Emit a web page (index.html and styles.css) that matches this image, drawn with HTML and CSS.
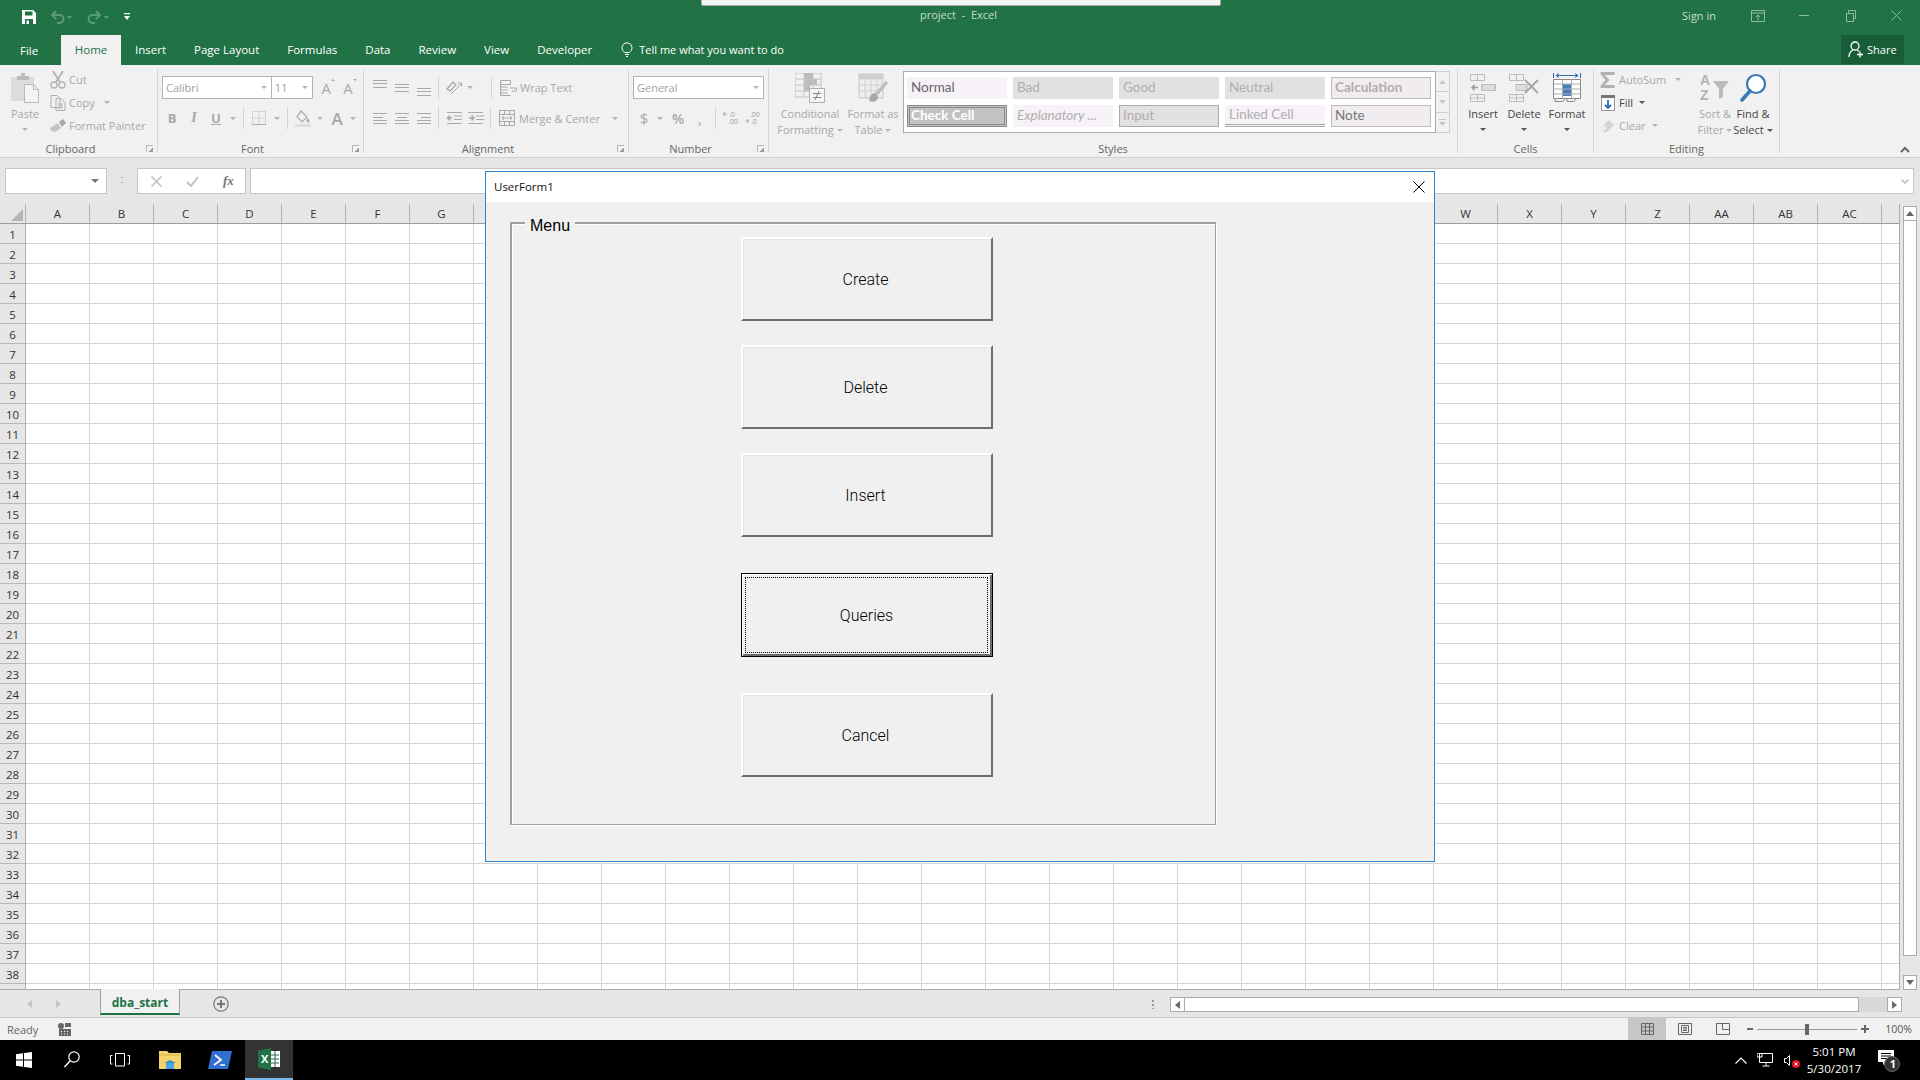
FILE: index.html
```html
<!DOCTYPE html>
<html lang="en">
<head>
  <meta charset="UTF-8">
  <title>project - Excel</title>
  <link rel="stylesheet" href="styles.css">
</head>
<body>
  <div class="rdp-bar"></div>

  <!-- title bar -->
  <header class="titlebar">
    <div class="qat">
      <svg class="qat-save" width="14" height="14" viewBox="0 0 14 14"><path d="M0 0h11l3 3v11H0z" fill="#fff"/><path d="M3 1.500h7.500v4H3z" fill="#217346"/><path d="M3 9h8v5H3z" fill="#217346"/><path d="M4.500 10.500h2.500V14H4.500z" fill="#fff"/></svg>
      <svg class="qat-undo" width="24" height="14" viewBox="0 0 24 14"><path d="M5 1L1 5l4 4M1.500 5h7a4 4 0 0 1 0 8H6" fill="none" stroke="#5e9c7b" stroke-width="1.800"/><path d="M16 6h5l-2.500 3z" fill="#5e9c7b"/></svg>
      <svg class="qat-redo" width="24" height="14" viewBox="0 0 24 14"><path d="M9 1l4 4-4 4M12.500 5h-7a4 4 0 0 0 0 8H8" fill="none" stroke="#5e9c7b" stroke-width="1.800"/><path d="M17 6h5l-2.500 3z" fill="#5e9c7b"/></svg>
      <svg class="qat-more" width="8" height="8" viewBox="0 0 8 8"><path d="M1 0h6v1.200H1zM1 3h6L4 7z" fill="#fff"/></svg>
    </div>
    <div class="doc-title">project &nbsp;-&nbsp; Excel</div>
    <div class="win-right">
      <span class="sign-in">Sign in</span>
      <svg class="win-disp" width="14" height="12" viewBox="0 0 14 12"><path d="M.5.500h13v11H.5zM.5 3h13M7 10V5M5 7l2-2 2 2" fill="none" stroke="#8fb9a3"/></svg>
      <svg class="win-min" width="10" height="1" viewBox="0 0 10 1"><path d="M0 0h10v1H0z" fill="#8fb9a3"/></svg>
      <svg class="win-rest" width="10" height="12" viewBox="0 0 10 12"><path d="M.5 3.500h7v8h-7zM2.500 3.500v-3h7v8h-2" fill="none" stroke="#8fb9a3"/></svg>
      <svg class="win-close" width="11" height="11" viewBox="0 0 11 11"><path d="M.5.500l10 10M10.500.500l-10 10" stroke="#8fb9a3"/></svg>
    </div>
  </header>

  <!-- tabs -->
  <nav class="tabs">
    <span class="tab tab-file">File</span>
    <span class="tab tab-on">Home</span>
    <span class="tab">Insert</span>
    <span class="tab">Page Layout</span>
    <span class="tab">Formulas</span>
    <span class="tab">Data</span>
    <span class="tab">Review</span>
    <span class="tab">View</span>
    <span class="tab">Developer</span>
    <span class="tell">
      <svg width="12" height="16" viewBox="0 0 12 16"><path d="M3.500 10.500C2 9 1 7.800 1 5.800a5 5 0 0 1 10 0c0 2-1 3.200-2.500 4.700zM4 12.500h4M5 14.500h2" fill="none" stroke="#fff"/></svg>
      Tell me what you want to do
    </span>
    <span class="share">
      <svg width="16" height="17" viewBox="0 0 16 17"><circle cx="7" cy="5" r="4" fill="none" stroke="#fff" stroke-width="1.300"/><path d="M1 16c0-4 2-6 4-7M9 9c1 .4 1.500.8 2 1.500M9 13.500h6M12 10.500v6" fill="none" stroke="#fff" stroke-width="1.300"/></svg>
      Share
    </span>
  </nav>

  <!-- ribbon -->
  <section class="ribbon">
    <div class="group g-clip">
      <div class="body">
        <div class="big w-paste">
          <svg width="28" height="30" viewBox="0 0 28 30"><path d="M0 4h23v24H0z" fill="#dddbdd"/><path d="M6 3h4V0h4v3h4v4H6z" fill="#bdbbbd"/><path d="M13.500 11.500h9l5 5v13h-14z" fill="#f6f3f6" stroke="#b9b9b9"/><path d="M22.500 11.500v5h5" fill="none" stroke="#b9b9b9"/></svg>
          <span class="big-txt off">Paste</span>
          <i class="caret"></i>
        </div>
        <div class="small-col">
          <div class="small off">
            <svg width="16" height="18" viewBox="0 0 16 18"><path d="M3 0l7 11M13 0L6 11" stroke="#b4b4b4" stroke-width="1.800"/><circle cx="4" cy="14" r="3" fill="none" stroke="#b4b4b4" stroke-width="1.400"/><circle cx="12" cy="14" r="3" fill="none" stroke="#b4b4b4" stroke-width="1.400"/></svg>
            Cut
          </div>
          <div class="small off">
            <svg width="15" height="16" viewBox="0 0 15 16"><path d="M.5.500h6l3 3v9h-9zM5.500 3.500h5l4 4v8h-9z" fill="#f1f1f1" stroke="#b0b0b0"/><path d="M7.500 9h5M7.500 11h5M7.500 13h5" stroke="#b0b0b0"/></svg>
            Copy <i class="caret caret-copy"></i>
          </div>
          <div class="small off">
            <svg width="16" height="14" viewBox="0 0 16 14"><path d="M0 9l8-5 3 5-6 4-2-1-1 1z" fill="#c4c4c4"/><path d="M9 3l4-3 3 4-4 4z" fill="#a8a8a8"/></svg>
            Format Painter
          </div>
        </div>
      </div>
      <div class="foot"><span></span><span>Clipboard</span><i class="launch"></i></div>
    </div>

    <div class="group g-font">
      <div class="body body-rows">
        <div class="row row-top">
          <div class="sel sel-font">Calibri<i class="caret"></i></div>
          <div class="sel sel-size">11<i class="caret"></i></div>
          <span class="glyph-a grow">A<i class="tiny-up"></i></span>
          <span class="glyph-a shrink">A<i class="tiny-down"></i></span>
        </div>
        <div class="row">
          <span class="tool off b">B</span>
          <span class="tool off it">I</span>
          <span class="tool off u">U</span>
          <span class="cbtn"><i class="caret"></i></span>
          <i class="vsep"></i>
          <span class="tool"><svg width="14" height="14" viewBox="0 0 14 14"><path d="M.5.500h13v13H.5zM7 .5v13M.5 7h13" fill="none" stroke="#b8b8b8" stroke-dasharray="1 1"/><path d="M0 13h14v1H0z" fill="#b0b0b0"/></svg></span>
          <span class="cbtn cbtn-b"><i class="caret"></i></span>
          <i class="vsep"></i>
          <span class="tool"><svg width="16" height="17" viewBox="0 0 16 17"><path d="M6 1l6 6-5 5-5-5z" fill="#f1f1f1" stroke="#a8a8a8" stroke-width="1.200"/><path d="M13 8c1 1.500 1.500 2 1.500 3a1.500 1.500 0 0 1-3 0c0-1 .5-1.500 1.500-3z" fill="#a8a8a8"/><path d="M0 14h16v3H0z" fill="#dedcde"/></svg></span>
          <span class="cbtn"><i class="caret"></i></span>
          <span class="tool off big-a">A</span>
          <span class="cbtn cbtn-l"><i class="caret"></i></span>
        </div>
      </div>
      <div class="foot"><span></span><span>Font</span><i class="launch"></i></div>
    </div>

    <div class="group g-align">
      <div class="body body-rows">
        <div class="row row-top">
          <span class="tool"><i class="lines l-top"></i></span>
          <span class="tool"><i class="lines"></i></span>
          <span class="tool"><i class="lines l-bot"></i></span>
          <i class="vsep vsep-tall"></i>
          <span class="tool"><svg width="16" height="15" viewBox="0 0 16 15"><path d="M1 9l6-7 3 3-6 6z" fill="none" stroke="#a8a8a8" stroke-width="1.300"/><path d="M5 14L15 4M12 3h3.500v3.500" fill="none" stroke="#a8a8a8"/></svg></span>
          <span class="cbtn cbtn-o"><i class="caret"></i></span>
          <i class="vsep vsep-far"></i>
          <svg class="wrap-ic" width="18" height="16" viewBox="0 0 18 16"><path d="M.5.500h10v4H.5zM.5 7h7M.5 10h7M.5 13h7M.5 4.500v11h10M10 8h6.500v3H12" fill="none" stroke="#a8a8a8"/></svg>
          <span class="ltxt ltxt-wrap off">Wrap Text</span>
        </div>
        <div class="row">
          <span class="tool"><i class="para p-left"></i></span>
          <span class="tool"><i class="para p-center"></i></span>
          <span class="tool"><i class="para p-right"></i></span>
          <i class="vsep vsep-tall"></i>
          <span class="tool"><svg width="16" height="12" viewBox="0 0 16 12"><path d="M1 .5h15M8 4h8M8 7.500h8M1 11.500h15" stroke="#a8a8a8"/><path d="M6 6H2M4 3.500L1.500 6 4 8.500" fill="none" stroke="#a8a8a8" stroke-width="1.500"/></svg></span>
          <span class="tool"><svg width="16" height="12" viewBox="0 0 16 12"><path d="M0 .5h15M0 11.500h15M8 4h8M8 7.500h8" stroke="#a8a8a8"/><path d="M1 6h4M3.500 3.500L6 6 3.500 8.500" fill="none" stroke="#a8a8a8" stroke-width="1.500"/></svg></span>
          <i class="vsep vsep-near"></i>
          <svg class="wrap-ic" width="16" height="16" viewBox="0 0 16 16"><path d="M.5.500h15v15H.5zM.5 4.500h15M.5 11.500h15M5.500.500v4M10.500.500v4M5.500 11.500v4M10.500 11.500v4M3 8h10M5 6L3 8l2 2M11 6l2 2-2 2" fill="none" stroke="#a8a8a8"/></svg>
          <span class="ltxt off">Merge &amp; Center</span>
          <i class="caret caret-merge"></i>
        </div>
      </div>
      <div class="foot"><span></span><span>Alignment</span><i class="launch"></i></div>
    </div>

    <div class="group g-num">
      <div class="body body-rows">
        <div class="row row-top">
          <div class="sel sel-num">General<i class="caret"></i></div>
        </div>
        <div class="row">
          <span class="tool off sym">$</span>
          <span class="cbtn cbtn-n"><i class="caret"></i></span>
          <span class="tool off sym pct">%</span>
          <span class="tool off sym">,</span>
          <i class="vsep"></i>
          <span class="tool"><svg width="18" height="20" viewBox="0 -3 18 20"><path d="M1 3h4M3 1L1 3l2 2" fill="none" stroke="#a8a8a8"/><text x="7" y="6" class="mini">.0</text><text x="6" y="13" class="mini">.00</text></svg></span>
          <span class="tool"><svg width="18" height="20" viewBox="0 -3 18 20"><text x="6" y="6" class="mini">.00</text><path d="M1 10h4M3 8l2 2-2 2" fill="none" stroke="#a8a8a8"/><text x="7" y="13" class="mini">.0</text></svg></span>
        </div>
      </div>
      <div class="foot"><span></span><span>Number</span><i class="launch"></i></div>
    </div>

    <div class="group g-styles">
      <div class="body">
        <div class="big w-cond">
          <svg width="30" height="30" viewBox="0 0 30 30"><path d="M0 0h26v24H0z" fill="#f1f1f1" stroke="#c4c4c4"/><path d="M9 0h9v6H9zM9 6h13v6H9zM9 12h6v6H9z" fill="#bcbcbc"/><path d="M0 6h26M0 12h26M0 18h26M9 0v24M18 0v24" stroke="#c4c4c4"/><path d="M14.500 15.500h15v14h-15z" fill="#f6f4f6" stroke="#b0b0b0"/><path d="M18 20.500h8M18 24.500h8M24 18l-4 9" fill="none" stroke="#888"/></svg>
          <span class="big-txt off">Conditional</span>
          <span class="big-txt off">Formatting<i class="caret caret-in"></i></span>
        </div>
        <div class="big w-fmt">
          <svg width="30" height="30" viewBox="0 0 30 30"><path d="M1 1h24v24H1z" fill="#eee" stroke="#c4c4c4"/><path d="M1 1h24v5H1z" fill="#d0d0d0"/><path d="M1 6h24M1 12h24M1 18h24M7 1v24M13 1v24M19 1v24" stroke="#cfcfcf"/><path d="M28 8l2 2-10 12-3-2z" fill="#bcbcbc"/><path d="M17 20c-3 0-5 2-6 8 5 2 9 0 9-5z" fill="#a8a8a8"/></svg>
          <span class="big-txt off">Format as</span>
          <span class="big-txt off">Table<i class="caret caret-in"></i></span>
        </div>
        <div class="gallery">
          <div class="style-grid">
            <span class="st st-normal">Normal</span>
            <span class="st st-bad">Bad</span>
            <span class="st st-bad">Good</span>
            <span class="st st-bad">Neutral</span>
            <span class="st st-calc">Calculation</span>
            <span class="st st-check">Check Cell</span>
            <span class="st st-expl">Explanatory ...</span>
            <span class="st st-input">Input</span>
            <span class="st st-link">Linked Cell</span>
            <span class="st st-note">Note</span>
          </div>
        </div>
        <div class="gal-scroll">
          <span><svg width="7" height="4" viewBox="0 0 7 4"><path d="M3.500 0L7 4H0z" fill="#c4c4c4"/></svg></span>
          <span><svg width="7" height="4" viewBox="0 0 7 4"><path d="M3.500 4L7 0H0z" fill="#c4c4c4"/></svg></span>
          <span><svg width="7" height="7" viewBox="0 0 7 7"><path d="M0 0h7v1H0zM3.500 7L7 3H0z" fill="#c4c4c4"/></svg></span>
        </div>
      </div>
      <div class="foot foot-c foot-styles">Styles</div>
    </div>

    <div class="group g-cells">
      <div class="body">
        <div class="big w-ins">
          <svg width="26" height="28" viewBox="0 0 26 28"><path d="M.5.500h14v6H.5zM7.500.5v6M11.500 10.500h14v6h-14zM18.500 10.500v6M.5 20.500h14v7H.5zM7.500 20.500v7M.5 24h14" fill="none" stroke="#bbb"/><path d="M12 10.500h13v6H12z" fill="#ddd" stroke="#bbb"/><path d="M8 13.500H2M4.500 11L2 13.500 4.500 16" fill="none" stroke="#999" stroke-width="1.500"/></svg>
          <span class="big-txt">Insert</span>
          <i class="caret caret-dk"></i>
        </div>
        <div class="big w-del">
          <svg width="30" height="28" viewBox="0 0 30 28"><path d="M.5.500h14v6H.5zM7.500.5v6M.5 20.500h14v7H.5zM7.500 20.500v7M.5 24h14" fill="none" stroke="#bbb"/><path d="M7 10.500h11v6H7z" fill="#ddd" stroke="#bbb"/><path d="M16 6l13 13M29 6L16 19" stroke="#a8a8a8" stroke-width="2"/></svg>
          <span class="big-txt">Delete</span>
          <i class="caret caret-dk"></i>
        </div>
        <div class="big w-form">
          <svg width="28" height="30" viewBox="0 0 28 30"><path d="M.5 0v5M27.500 0v5M3 2.500h22M6 .5L3 2.500l3 2M22 .5l3 2-3 2" fill="none" stroke="#2b6cb0"/><path d="M.5 6.500h27v19H.5z" fill="#fff" stroke="#888"/><path d="M10 11h8v12h-8z" fill="#4a7ebb"/><path d="M.5 11h27M.5 16h27M.5 21h27M9.500 6.500v19M18.500 6.500v19" stroke="#aaa" fill="none"/><path d="M2 25.500v3h8l2-3M14 25.500v3h7l2-3" fill="none" stroke="#888"/></svg>
          <span class="big-txt">Format</span>
          <i class="caret caret-dk"></i>
        </div>
      </div>
      <div class="foot foot-c">Cells</div>
    </div>

    <div class="group g-edit">
      <div class="body">
        <div class="small-col edit-col">
          <div class="small off">
            <svg width="15" height="16" viewBox="0 0 15 16"><path d="M0 0h14v3H4l5 5-5 5h10v3H0v-2l5-6-5-6z" fill="#b0b0b0"/></svg>
            AutoSum <i class="caret caret-sum"></i>
          </div>
          <div class="small">
            <svg width="14" height="16" viewBox="0 0 14 16"><path d="M.5.500h13v15H.5z" fill="#fff" stroke="#999"/><path d="M0 0h14v3H0z" fill="#777"/><path d="M7 5v8M4 10l3 3 3-3" fill="none" stroke="#2b6cb0" stroke-width="1.800"/></svg>
            Fill<i class="caret caret-in caret-dk"></i>
          </div>
          <div class="small off">
            <svg width="14" height="14" viewBox="0 0 14 14"><path d="M0 9l8-8 5 5-7 7H3z" fill="#d4d4d4"/><path d="M0 9l3 3 3-3-3-3z" fill="#eee"/></svg>
            Clear<i class="caret caret-in"></i>
          </div>
        </div>
        <div class="big w-sort">
          <div class="sort-ic">
            <span class="az-col"><span>A</span><span>Z</span></span>
            <svg width="16" height="18" viewBox="0 0 16 18"><path d="M0 0h16l-6 8v8l-4 2V8z" fill="#bbb"/></svg>
          </div>
          <span class="big-txt off">Sort &amp;</span>
          <span class="big-txt off">Filter<i class="caret caret-in"></i></span>
        </div>
        <div class="big w-find">
          <svg width="28" height="30" viewBox="0 0 28 30"><circle cx="17" cy="11" r="9" fill="#fff" stroke="#3b78b8" stroke-width="2.200"/><path d="M11 18l-8 9" stroke="#3b78b8" stroke-width="3.600" stroke-linecap="round"/></svg>
          <span class="big-txt">Find &amp;</span>
          <span class="big-txt">Select<i class="caret caret-in caret-dk"></i></span>
        </div>
      </div>
      <div class="foot foot-c">Editing</div>
    </div>

    <svg class="collapse" width="10" height="7" viewBox="0 0 10 7"><path d="M1 6l4-4 4 4" fill="none" stroke="#666" stroke-width="2"/></svg>
  </section>

  <!-- formula bar -->
  <div class="fbar">
    <div class="namebox"><i class="caret caret-name"></i></div>
    <span class="fdots"></span>
    <div class="fbtns">
      <svg width="11" height="11" viewBox="0 0 11 11"><path d="M.5.500l10 10M10.500.500l-10 10" stroke="#c0c0c0" stroke-width="1.500"/></svg>
      <svg width="13" height="11" viewBox="0 0 13 11"><path d="M1 6l4 4 7-9" fill="none" stroke="#c0c0c0" stroke-width="2"/></svg>
      <span class="fx">fx</span>
    </div>
    <div class="finput"><svg width="8" height="5" viewBox="0 0 8 5"><path d="M.5.500L4 4 7.500.5" fill="none" stroke="#bbb" stroke-width="1.500"/></svg></div>
  </div>

  <!-- sheet -->
  <div class="sheet">
    <div class="sheet-main">
      <div class="col-heads">
        <div class="corner"><i></i></div>
        <span class="ch">A</span><span class="ch">B</span><span class="ch">C</span><span class="ch">D</span><span class="ch">E</span><span class="ch">F</span><span class="ch">G</span><span class="ch">H</span><span class="ch">I</span><span class="ch">J</span><span class="ch">K</span><span class="ch">L</span><span class="ch">M</span><span class="ch">N</span><span class="ch">O</span><span class="ch">P</span><span class="ch">Q</span><span class="ch">R</span><span class="ch">S</span><span class="ch">T</span><span class="ch">U</span><span class="ch">V</span><span class="ch">W</span><span class="ch">X</span><span class="ch">Y</span><span class="ch">Z</span><span class="ch">AA</span><span class="ch">AB</span><span class="ch">AC</span>
      </div>
      <div class="sheet-body">
        <div class="row-heads">
          <span>1</span><span>2</span><span>3</span><span>4</span><span>5</span><span>6</span><span>7</span><span>8</span><span>9</span><span>10</span>
          <span>11</span><span>12</span><span>13</span><span>14</span><span>15</span><span>16</span><span>17</span><span>18</span><span>19</span><span>20</span>
          <span>21</span><span>22</span><span>23</span><span>24</span><span>25</span><span>26</span><span>27</span><span>28</span><span>29</span><span>30</span>
          <span>31</span><span>32</span><span>33</span><span>34</span><span>35</span><span>36</span><span>37</span><span>38</span>
        </div>
        <div class="cells"></div>
      </div>
    </div>
    <div class="vscroll">
      <span class="sb-btn"><svg width="8" height="5" viewBox="0 0 8 5"><path d="M4 0l4 5H0z" fill="#666"/></svg></span>
      <span class="sb-thumb"></span>
      <span class="sb-btn"><svg width="8" height="5" viewBox="0 0 8 5"><path d="M4 5l4-5H0z" fill="#666"/></svg></span>
    </div>
  </div>

  <!-- sheet tabs -->
  <div class="sheetbar">
    <svg class="nav-l" width="5" height="8" viewBox="0 0 5 8"><path d="M5 0v8L0 4z" fill="#c4c4c4"/></svg>
    <svg class="nav-r" width="5" height="8" viewBox="0 0 5 8"><path d="M0 0v8l5-4z" fill="#c4c4c4"/></svg>
    <span class="sheet-tab">dba_start</span>
    <svg class="add-sheet" width="16" height="16" viewBox="0 0 16 16"><circle cx="8" cy="8" r="7.200" fill="none" stroke="#777" stroke-width="1.200"/><path d="M8 4v8M4 8h8" stroke="#777" stroke-width="2"/></svg>
    <span class="hdots"></span>
    <div class="hscroll">
      <span class="hb"><svg width="5" height="8" viewBox="0 0 5 8"><path d="M5 0v8L0 4z" fill="#666"/></svg></span>
      <span class="h-thumb"></span>
      <span class="hb"><svg width="5" height="8" viewBox="0 0 5 8"><path d="M0 0v8l5-4z" fill="#666"/></svg></span>
    </div>
  </div>

  <!-- status bar -->
  <footer class="status">
    <span class="ready">Ready</span>
    <svg class="macro" width="13" height="13" viewBox="0 0 13 13"><circle cx="3" cy="3" r="3" fill="#666"/><path d="M1 6h12v7H1z" fill="#666"/><path d="M7 0h6v4H7z" fill="#666"/><path d="M3 8h1v1H3zM6 8h1v1H6zM9 8h1v1H9zM3 10.500h1v1H3zM6 10.500h1v1H6zM9 10.500h1v1H9z" fill="#fff"/></svg>
    <div class="views">
      <span class="view view-on"><svg width="13" height="12" viewBox="0 0 13 12"><path d="M.5.500h12v11H.5zM.5 4h12M.5 8h12M4.500.500v11M8.500.500v11" fill="none" stroke="#666"/></svg></span>
      <span class="view"><svg width="14" height="12" viewBox="0 0 14 12"><path d="M.5.500h13v11H.5zM3.500 2.500h7v7h-7zM5 4.500h4M5 6h4M5 7.500h4" fill="none" stroke="#666"/></svg></span>
      <span class="view"><svg width="14" height="12" viewBox="0 0 14 12"><path d="M.5 11.500V.5h13v11zM6.500.5v6h7" fill="none" stroke="#666"/></svg></span>
    </div>
    <div class="zoom">
      <i class="z-minus"></i>
      <div class="z-track"><i></i></div>
      <i class="z-plus"></i>
      <span class="z-val">100%</span>
    </div>
  </footer>

  <!-- taskbar -->
  <div class="taskbar">
    <svg class="t-start" width="16" height="16" viewBox="0 0 16 16"><path d="M0 2.300L7 1.300v6.300H0zM8 1.100L16 0v7.600H8zM0 8.400h7v6.300L0 13.700zM8 8.400h8V16l-8-1.100z" fill="#fff"/></svg>
    <svg class="t-search" width="16" height="17" viewBox="0 0 16 17"><circle cx="10" cy="6" r="5.200" fill="none" stroke="#fff" stroke-width="1.200"/><path d="M6 10l-5.500 6" stroke="#fff" stroke-width="1.400"/></svg>
    <svg class="t-view" width="20" height="14" viewBox="0 0 20 14"><path d="M5.500.5h9v12.500h-9zM2.500 2.500H.5v8.500h2M17.500 2.500h2v8.500h-2" fill="none" stroke="#fff"/></svg>
    <svg class="t-files" width="22" height="18" viewBox="0 0 22 18"><path d="M0 0h8l2 2h12v16H0z" fill="#f4d26e"/><path d="M0 4h22" stroke="#e0b040"/><path d="M7 12h8v6H7z" fill="#4aa8e0"/><path d="M5 12l6-3 6 3z" fill="#3a8cc8"/></svg>
    <svg class="t-ps" width="24" height="18" viewBox="0 0 24 18"><path d="M4 0h20l-4 18H0z" fill="#2f6fd0"/><path d="M7 4l6 5-7 5" fill="none" stroke="#fff" stroke-width="1.800"/><path d="M12 14h5" stroke="#fff" stroke-width="1.500"/></svg>
    <div class="t-excel">
      <svg width="22" height="22" viewBox="0 0 22 22"><path d="M12 3h10v16H12z" fill="#fff"/><path d="M13 7h8M13 11h8M13 15h8M17 3v16" stroke="#217346"/><path d="M0 2.500L13 0v22L0 19.500z" fill="#217346"/><text x="3" y="15" class="xl">X</text></svg>
    </div>
    <div class="tray">
      <svg width="12" height="7" viewBox="0 0 12 7"><path d="M.5 6.500L6 1l5.500 5.500" fill="none" stroke="#fff" stroke-width="1.200"/></svg>
      <svg class="tray-net" width="16" height="14" viewBox="0 0 16 14"><path d="M2.500.5h13v9h-13zM9 9.500v3M5.500 13h7M0 0h5v4H0z" fill="#000" stroke="#fff"/></svg>
      <svg class="tray-vol" width="16" height="14" viewBox="0 0 16 14"><path d="M.5 4.500h2l3-3v10l-3-3h-2z" fill="none" stroke="#fff"/><circle cx="12" cy="10" r="4" fill="#e81123"/><path d="M10.500 8.500l3 3M13.500 8.500l-3 3" stroke="#fff"/></svg>
      <div class="clock"><span>5:01 PM</span><span>5/30/2017</span></div>
      <svg class="tray-note" width="24" height="24" viewBox="0 0 24 24"><path d="M2 2h16v12H10l-3 3v-3H2z" fill="#fff"/><path d="M5 5.500h10M5 8h10M5 10.500h6" stroke="#000"/><circle cx="16" cy="16" r="7.500" fill="#333" stroke="#666"/><text x="13.800" y="20" class="note-n">1</text></svg>
    </div>
  </div>

  <!-- userform -->
  <div class="dialog">
    <div class="dlg-title">
      <span>UserForm1</span>
      <svg width="12" height="12" viewBox="0 0 12 12"><path d="M.5.500l11 11M11.500.500l-11 11" stroke="#000"/></svg>
    </div>
    <div class="dlg-body">
      <div class="frame">
        <span class="frame-label">Menu</span>
        <button class="cmd">Create</button>
        <button class="cmd">Delete</button>
        <button class="cmd">Insert</button>
        <button class="cmd cmd-focus wide-gap"><span>Queries</span></button>
        <button class="cmd wide-gap">Cancel</button>
      </div>
    </div>
  </div>
</body>
</html>
```

FILE: styles.css
```css
* {
  box-sizing: border-box;
}
html, body {
  margin: 0;
  padding: 0;
}
body {
  width: 1920px;
  height: 1080px;
  overflow: hidden;
  position: relative;
  display: flex;
  flex-direction: column;
  font-family: "Open Sans", sans-serif;
  font-size: 11px;
  color: #444;
  background: #e6e6e6;
}
i {
  display: block;
}
svg {
  display: block;
  flex: none;
}

.rdp-bar {
  position: absolute;
  left: 701px;
  top: -2px;
  width: 520px;
  height: 8px;
  background: #f4f4f4;
  border: 1px solid #a8a8a8;
  border-radius: 2px;
  z-index: 5;
}

/* title bar */
.titlebar {
  height: 35px;
  background: #217346;
  display: flex;
  align-items: center;
  position: relative;
  color: #c4dccf;
}
.qat {
  display: flex;
  align-items: center;
  padding-left: 22px;
  padding-bottom: 2px;
}
.qat-undo {
  margin-left: 15px;
}
.qat-redo {
  margin-left: 12px;
}
.qat-more {
  margin-left: 12px;
}
.doc-title {
  position: absolute;
  left: 920px;
  top: 7px;
  font-size: 11px;
}
.win-right {
  margin-left: auto;
  display: flex;
  align-items: center;
  padding-right: 18px;
  padding-bottom: 4px;
}
.sign-in {
  font-size: 11px;
  margin-right: 35px;
}
.win-min {
  margin-left: 34px;
}
.win-rest {
  margin-left: 37px;
}
.win-close {
  margin-left: 35px;
}

/* tabs */
.tabs {
  height: 30px;
  background: #217346;
  display: flex;
  color: #fff;
  font-size: 11.500px;
}
.tab {
  padding: 0 14px;
  line-height: 29px;
  white-space: nowrap;
}
.tab-file {
  width: 61px;
  padding: 0 0 0 20px;
  line-height: 31px;
}
.tab-on {
  background: #f1f1f1;
  color: #217346;
  width: 60px;
  text-align: center;
  padding: 0;
}
.tell {
  display: flex;
  align-items: center;
  gap: 6px;
  margin-left: 15px;
  font-size: 11px;
  white-space: nowrap;
  padding-bottom: 1px;
}
.share {
  margin-left: auto;
  margin-right: 16px;
  width: 63px;
  height: 29px;
  background: #195c38;
  display: flex;
  align-items: center;
  gap: 3px;
  padding-left: 7px;
  font-size: 11px;
}

/* ribbon */
.ribbon {
  height: 93px;
  background: #f1f1f1;
  border-bottom: 1px solid #d2d2d2;
  display: flex;
  align-items: flex-start;
  position: relative;
}
.group {
  height: 84px;
  margin-top: 4px;
  border-right: 1px solid #d6d6d6;
  display: flex;
  flex-direction: column;
  flex: none;
}
.g-clip { width: 158px; }
.g-font { width: 206px; }
.g-align { width: 265px; }
.g-num { width: 140px; }
.g-styles { width: 689px; }
.g-cells { width: 136px; }
.g-edit { width: 186px; }

.body {
  height: 70px;
  display: flex;
}
.body-rows {
  flex-direction: column;
  padding-top: 7px;
}
.foot {
  height: 14px;
  line-height: 20px;
  color: #666;
  display: grid;
  grid-template-columns: 1fr auto 1fr;
  padding: 0 16px 0 0;
}
.foot-c {
  display: block;
  text-align: center;
  padding: 0;
}
.foot-styles {
  margin-left: -4px;
}
.launch {
  width: 7px;
  height: 7px;
  justify-self: end;
  margin: 6px -12px 0 0;
  border-right: 1px solid #b8b8b8;
  border-top: 1px solid #b8b8b8;
  transform: scale(-1, 1);
  background: linear-gradient(45deg, #9a9a9a 40%, transparent 40%);
}
.off {
  color: #a8a8a8;
}
.caret {
  width: 0;
  height: 0;
  border: 3px solid transparent;
  border-top: 3.500px solid #b4b4b4;
  border-bottom: 0;
}
.caret-dk {
  border-top-color: #555;
}
.caret-in {
  display: inline-block;
  margin-left: 3px;
  vertical-align: 2px;
}

.big {
  display: flex;
  flex-direction: column;
  align-items: center;
  padding-top: 4px;
  flex: none;
}
.big > svg {
  height: 30px;
  margin-bottom: 3px;
}
.big-txt {
  line-height: 16px;
  white-space: nowrap;
}
.big > .caret {
  margin-top: 6px;
}
.w-paste { width: 50px; }
.w-cond { width: 74px; }
.w-fmt { width: 52px; }
.w-ins { width: 42px; }
.w-del { width: 40px; }
.w-form { width: 46px; }
.w-sort { width: 38px; }
.w-find { width: 38px; }

.sort-ic {
  width: 30px;
  height: 30px;
  margin-bottom: 3px;
  display: flex;
  align-items: flex-end;
}
.sort-ic svg {
  margin: 0 0 4px 1px;
}
.az-col {
  display: flex;
  flex-direction: column;
  font: 700 14px/15px "Liberation Sans", sans-serif;
  color: #b4b4b4;
  width: 12px;
}

.small-col {
  display: flex;
  flex-direction: column;
  margin-top: -1px;
}
.small {
  height: 23px;
  display: flex;
  align-items: center;
  gap: 3px;
  white-space: nowrap;
}
.small svg {
  width: 16px;
}
.caret-copy {
  margin-left: 6px;
}
.edit-col {
  width: 102px;
  padding-left: 6px;
}
.caret-sum {
  margin-left: 6px;
}

.row {
  display: flex;
  align-items: center;
  height: 22px;
}
.row-top {
  height: 23px;
  margin-bottom: 8px;
}
.g-font .row { padding-left: 3px; }
.g-font .row-top { padding-left: 4px; }
.g-align .row { padding-left: 5px; }
.g-num .row { padding-left: 4px; }

.sel {
  height: 23px;
  background: #fff;
  border: 1px solid #b4b4b4;
  display: flex;
  align-items: center;
  justify-content: space-between;
  padding: 0 4px 0 3px;
  color: #a0a0a0;
}
.sel-font { width: 111px; }
.sel-size { width: 43px; margin-left: -1px; }
.sel-num { width: 131px; }
.glyph-a {
  font-size: 15px;
  color: #aaa;
  width: 20px;
  margin-left: 2px;
  display: flex;
}
.grow { margin-left: 8px; }
.tiny-up, .tiny-down {
  width: 0;
  height: 0;
  border: 2.500px solid transparent;
  margin-top: 1px;
}
.tiny-up { border-bottom-color: #aaa; border-top: 0; }
.tiny-down { border-top-color: #aaa; border-bottom: 0; }

.tool {
  width: 22px;
  height: 22px;
  flex: none;
  display: flex;
  align-items: center;
  justify-content: center;
  font-size: 13px;
}
.tool.b { font-weight: 700; }
.tool.it { font-style: italic; font-family: "Liberation Serif", serif; font-weight: 700; font-size: 14px; }
.tool.u { font-weight: 700; text-decoration: underline; }
.tool.big-a { font-size: 17px; font-weight: 600; }
.tool.sym { font-size: 15px; }
.tool.pct { font-size: 14px; font-weight: 600; }
.cbtn {
  width: 12px;
  flex: none;
  display: flex;
  justify-content: center;
}
.cbtn-b { margin-left: 1px; }
.cbtn-o { width: 10px; }
.cbtn-n { width: 10px; margin-right: 2px; }
.cbtn-l { width: 10px; }
.vsep {
  width: 1px;
  height: 22px;
  background: #d2d2d2;
  margin: 0 4px;
  flex: none;
}
.vsep-tall { margin: 0 4px 0 3px; }
.vsep-far { margin: 0 5px 0 16px; }
.vsep-near { margin: 0 5px 0 3px; }
.wrap-ic { margin-left: 3px; }
.ltxt {
  margin-left: 4px;
  white-space: nowrap;
}
.ltxt-wrap { margin-left: 2px; }
.caret-merge { margin-left: 12px; }

.lines, .para {
  width: 14px;
  height: 8px;
  border-top: 1px solid #a8a8a8;
  border-bottom: 1px solid #a8a8a8;
  position: relative;
}
.lines::after {
  content: "";
  position: absolute;
  left: 0;
  right: 0;
  top: 2px;
  height: 1px;
  background: #a8a8a8;
}
.l-top { transform: translateY(-4px); }
.l-bot { transform: translateY(4px); }
.para {
  height: 11px;
  background: linear-gradient(#a8a8a8, #a8a8a8) left 3px / 10px 1px no-repeat,
    linear-gradient(#a8a8a8, #a8a8a8) left 6px / 14px 1px no-repeat;
}
.p-center {
  background: linear-gradient(#a8a8a8, #a8a8a8) center 3px / 10px 1px no-repeat,
    linear-gradient(#a8a8a8, #a8a8a8) center 6px / 14px 1px no-repeat;
}
.p-right {
  background: linear-gradient(#a8a8a8, #a8a8a8) right 3px / 10px 1px no-repeat,
    linear-gradient(#a8a8a8, #a8a8a8) right 6px / 14px 1px no-repeat;
}
.mini {
  font: 7px "Open Sans", sans-serif;
  fill: #999;
}

/* styles gallery */
.g-styles {
  padding-left: 4px;
}
.g-styles .body {
  padding-top: 2px;
}
.w-cond, .w-fmt {
  margin-top: -2px;
}
.gallery {
  margin-left: 4px;
  width: 533px;
  height: 62px;
  background: #fff;
  border: 1px solid #ababab;
  padding: 5px 3px;
}
.style-grid {
  display: grid;
  grid-template-columns: repeat(5, 100px);
  grid-auto-rows: 22px;
  gap: 6px;
}
.st {
  font-family: Lato, sans-serif;
  font-size: 13.500px;
  line-height: 21px;
  padding-left: 4px;
  color: #b0aeb0;
  white-space: nowrap;
}
.st-normal { background: #f6f2f7; color: #666; }
.st-bad { background: #e3e0e3; }
.st-calc {
  background: #f0ecf0;
  border: 1px solid #bbb;
  font-weight: 700;
  line-height: 19px;
  padding-left: 3px;
}
.st-check {
  background: #c4c2c5;
  border: 3px double #888;
  color: #fff;
  font-weight: 700;
  line-height: 15px;
  padding-left: 1px;
}
.st-expl { background: #f6f2f7; font-style: italic; }
.st-input {
  background: #e3e0e3;
  border: 1px solid #aaa;
  line-height: 19px;
  padding-left: 3px;
}
.st-link {
  background: #f6f2f7;
  border-bottom: 3px double #aaa;
  line-height: 19px;
}
.st-note {
  background: #f0ecf0;
  border: 1px solid #bbb;
  line-height: 19px;
  padding-left: 3px;
  color: #777;
}
.gal-scroll {
  width: 14px;
  height: 62px;
  border: 1px solid #d0d0d0;
  border-left: 0;
  display: flex;
  flex-direction: column;
}
.gal-scroll span {
  flex: 1;
  display: flex;
  align-items: center;
  justify-content: center;
  border-bottom: 1px solid #d0d0d0;
}
.gal-scroll span:last-child {
  border-bottom: 0;
}
.g-cells .body {
  padding-left: 4px;
}
.collapse {
  position: absolute;
  left: 1900px;
  top: 81px;
}

/* formula bar */
.fbar {
  height: 46px;
  display: flex;
  padding: 10px 6px 0 5px;
  background: #e6e6e6;
}
.namebox {
  width: 102px;
  height: 26px;
  background: #fff;
  border: 1px solid #c6c6c6;
  display: flex;
  align-items: center;
  justify-content: flex-end;
  padding-right: 7px;
}
.caret-name {
  border-width: 4px;
  border-bottom: 0;
  border-top-color: #777;
}
.fdots {
  width: 2px;
  height: 12px;
  margin: 7px 14px 0 14px;
  background: radial-gradient(circle, #aaa 1px, transparent 1px) 0 0 / 2px 5px;
}
.fbtns {
  width: 109px;
  height: 26px;
  background: #fff;
  border: 1px solid #c6c6c6;
  display: flex;
  align-items: center;
  gap: 24px;
  padding-left: 13px;
}
.fx {
  font: italic 700 13px "Liberation Serif", serif;
  color: #777;
}
.finput {
  flex: 1;
  height: 26px;
  margin-left: 4px;
  background: #fff;
  border: 1px solid #c6c6c6;
  display: flex;
  align-items: center;
  justify-content: flex-end;
  padding-right: 4px;
}

/* sheet */
.sheet {
  height: 786px;
  display: flex;
  background: #e6e6e6;
}
.sheet-main {
  width: 1900px;
  border-right: 1px solid #ababab;
  border-bottom: 1px solid #ababab;
  display: flex;
  flex-direction: column;
  overflow: hidden;
}
.col-heads {
  height: 20px;
  display: flex;
  border-bottom: 1px solid #9b9b9b;
  flex: none;
}
.corner {
  width: 26px;
  flex: none;
  border-right: 1px solid #b4b4b4;
  position: relative;
}
.corner i {
  position: absolute;
  right: 2px;
  bottom: 2px;
  border: 6px solid #b4b4b4;
  border-top-color: transparent;
  border-left-color: transparent;
}
.ch {
  width: 64px;
  flex: none;
  text-align: center;
  line-height: 19px;
  font-size: 11.500px;
  color: #333;
  border-right: 1px solid #b4b4b4;
}
.sheet-body {
  flex: 1;
  display: flex;
  overflow: hidden;
}
.row-heads {
  width: 26px;
  flex: none;
  display: flex;
  flex-direction: column;
  border-right: 1px solid #b0b0b0;
}
.row-heads span {
  height: 20px;
  flex: none;
  line-height: 21px;
  text-align: center;
  font-size: 11.500px;
  color: #333;
  border-bottom: 1px solid #b8b8b8;
}
.cells {
  flex: 1;
  background-color: #fff;
  background-image: linear-gradient(to right, transparent 63px, #d4d4d4 63px),
    linear-gradient(to bottom, transparent 19px, #d4d4d4 19px);
  background-size: 64px 100%, 100% 20px;
}
.vscroll {
  flex: 1;
  padding: 2px 3px 0 3px;
  display: flex;
  flex-direction: column;
}
.sb-btn {
  height: 15px;
  background: #fff;
  border: 1px solid #ababab;
  display: flex;
  align-items: center;
  justify-content: center;
  flex: none;
}
.sb-thumb {
  height: 735px;
  background: #fff;
  border: 1px solid #ababab;
  border-top: 0;
  margin-bottom: 19px;
}

/* sheet tabs */
.sheetbar {
  height: 28px;
  display: flex;
  align-items: flex-start;
  position: relative;
  background: #e6e6e6;
  border-bottom: 1px solid #c6c6c6;
}
.nav-l {
  margin: 10px 0 0 27px;
}
.nav-r {
  margin: 10px 0 0 24px;
}
.sheet-tab {
  width: 80px;
  height: 26px;
  margin-left: 39px;
  margin-top: -1px;
  background: #f1f1f1;
  border: 1px solid #a0a0a0;
  border-top: 0;
  border-bottom: 2px solid #217346;
  color: #217346;
  font-weight: 700;
  font-size: 12px;
  text-align: center;
  line-height: 28px;
}
.add-sheet {
  margin: 6px 0 0 33px;
}
.hdots {
  width: 2px;
  height: 10px;
  margin: 9px 0 0 923px;
  background: radial-gradient(circle, #999 1px, transparent 1px) 0 0 / 2px 4px;
}
.hscroll {
  display: flex;
  align-items: stretch;
  height: 15px;
  width: 732px;
  margin: 7px 0 0 16px;
  background: #d8d8d8;
}
.hb {
  width: 15px;
  background: #fff;
  border: 1px solid #ababab;
  display: flex;
  align-items: center;
  justify-content: center;
}
.h-thumb {
  width: 674px;
  margin-right: 28px;
  background: #fff;
  border: 1px solid #ababab;
  border-left: 0;
}

/* status bar */
.status {
  height: 22px;
  background: #f1f1f1;
  display: flex;
  align-items: center;
  color: #666;
}
.ready {
  margin-left: 7px;
  font-size: 11px;
}
.macro {
  margin-left: 20px;
}
.views {
  margin-left: auto;
  display: flex;
  height: 22px;
}
.view {
  width: 38px;
  display: flex;
  align-items: center;
  justify-content: center;
}
.view-on {
  background: #c6c6c6;
}
.zoom {
  display: flex;
  align-items: center;
  width: 178px;
  padding-left: 5px;
  padding-right: 8px;
}
.z-minus {
  width: 6px;
  height: 2px;
  background: #666;
}
.z-track {
  width: 100px;
  height: 1px;
  background: #999;
  margin: 0 4px;
  display: flex;
  justify-content: center;
  align-items: center;
}
.z-track i {
  width: 4px;
  height: 11px;
  background: #666;
}
.z-plus {
  width: 8px;
  height: 8px;
  background: linear-gradient(#666, #666) center / 8px 2px no-repeat,
    linear-gradient(#666, #666) center / 2px 8px no-repeat;
}
.z-val {
  margin-left: auto;
  font-size: 10.500px;
  color: #555;
}

/* taskbar */
.taskbar {
  height: 40px;
  background: #000;
  display: flex;
  align-items: center;
  flex: none;
  color: #fff;
}
.t-start { margin-left: 16px; }
.t-search { margin-left: 32px; margin-bottom: 1px; }
.t-view { margin-left: 30px; }
.t-files { margin-left: 29px; }
.t-ps { margin-left: 27px; }
.t-excel {
  width: 48px;
  height: 40px;
  margin-left: 13px;
  background: #333;
  border-bottom: 2px solid #76b9ed;
  display: flex;
  align-items: center;
  justify-content: center;
}
.xl {
  font: 700 11px "Open Sans", sans-serif;
  fill: #fff;
}
.tray {
  margin-left: auto;
  display: flex;
  align-items: center;
  padding-right: 20px;
}
.tray-net { margin-left: 10px; }
.tray-vol { margin-left: 11px; margin-top: 2px; }
.clock {
  display: flex;
  flex-direction: column;
  align-items: center;
  width: 58px;
  margin-left: 5px;
  font-size: 11.500px;
  line-height: 17px;
  white-space: nowrap;
}
.tray-note {
  margin-left: 13px;
}
.note-n {
  font: 700 11px "Open Sans", sans-serif;
  fill: #fff;
}

/* userform */
.dialog {
  position: absolute;
  left: 485px;
  top: 171px;
  width: 950px;
  height: 691px;
  background: #f0f0f0;
  border: 1px solid #2b86cf;
  z-index: 3;
}
.dlg-title {
  height: 30px;
  background: #fff;
  display: flex;
  align-items: center;
  justify-content: space-between;
  padding: 0 9px 1px 8px;
  color: #111;
  font-size: 11.500px;
}
.dlg-body {
  padding: 20px 0 0 24px;
}
.frame {
  position: relative;
  width: 706px;
  height: 603px;
  border: solid #a0a0a0;
  border-width: 2px 1px 1px 2px;
  box-shadow: inset 1px 1px 0 #fff, 1px 1px 0 #fff;
  padding: 13px 0 0 229px;
  display: flex;
  flex-direction: column;
  align-items: flex-start;
  gap: 24px;
}
.frame-label {
  position: absolute;
  left: 13px;
  top: -8px;
  padding: 0 5px 0 5px;
  background: #f0f0f0;
  font: 16px/20px "Liberation Sans", sans-serif;
  color: #000;
}
.cmd {
  width: 252px;
  height: 84px;
  flex: none;
  font: 300 16px Roboto, sans-serif;
  color: #000;
  background: #f0f0f0;
  border: 2px solid;
  border-color: #fff #6e6e6e #6e6e6e #fff;
  box-shadow: inset 1px 1px 0 #e3e3e3;
  padding: 0 3px 0 0;
  border-radius: 0;
}
.wide-gap {
  margin-top: 12px;
}
.cmd-focus {
  border: 1px solid #000;
  box-shadow: inset 1px 1px 0 #fff, inset -2px -2px 0 #6e6e6e;
  padding: 3px 4px 3px 3px;
}
.cmd-focus span {
  display: flex;
  align-items: center;
  justify-content: center;
  width: 100%;
  height: 100%;
  outline: 1px dotted #000;
  outline-offset: -1px;
}
```
